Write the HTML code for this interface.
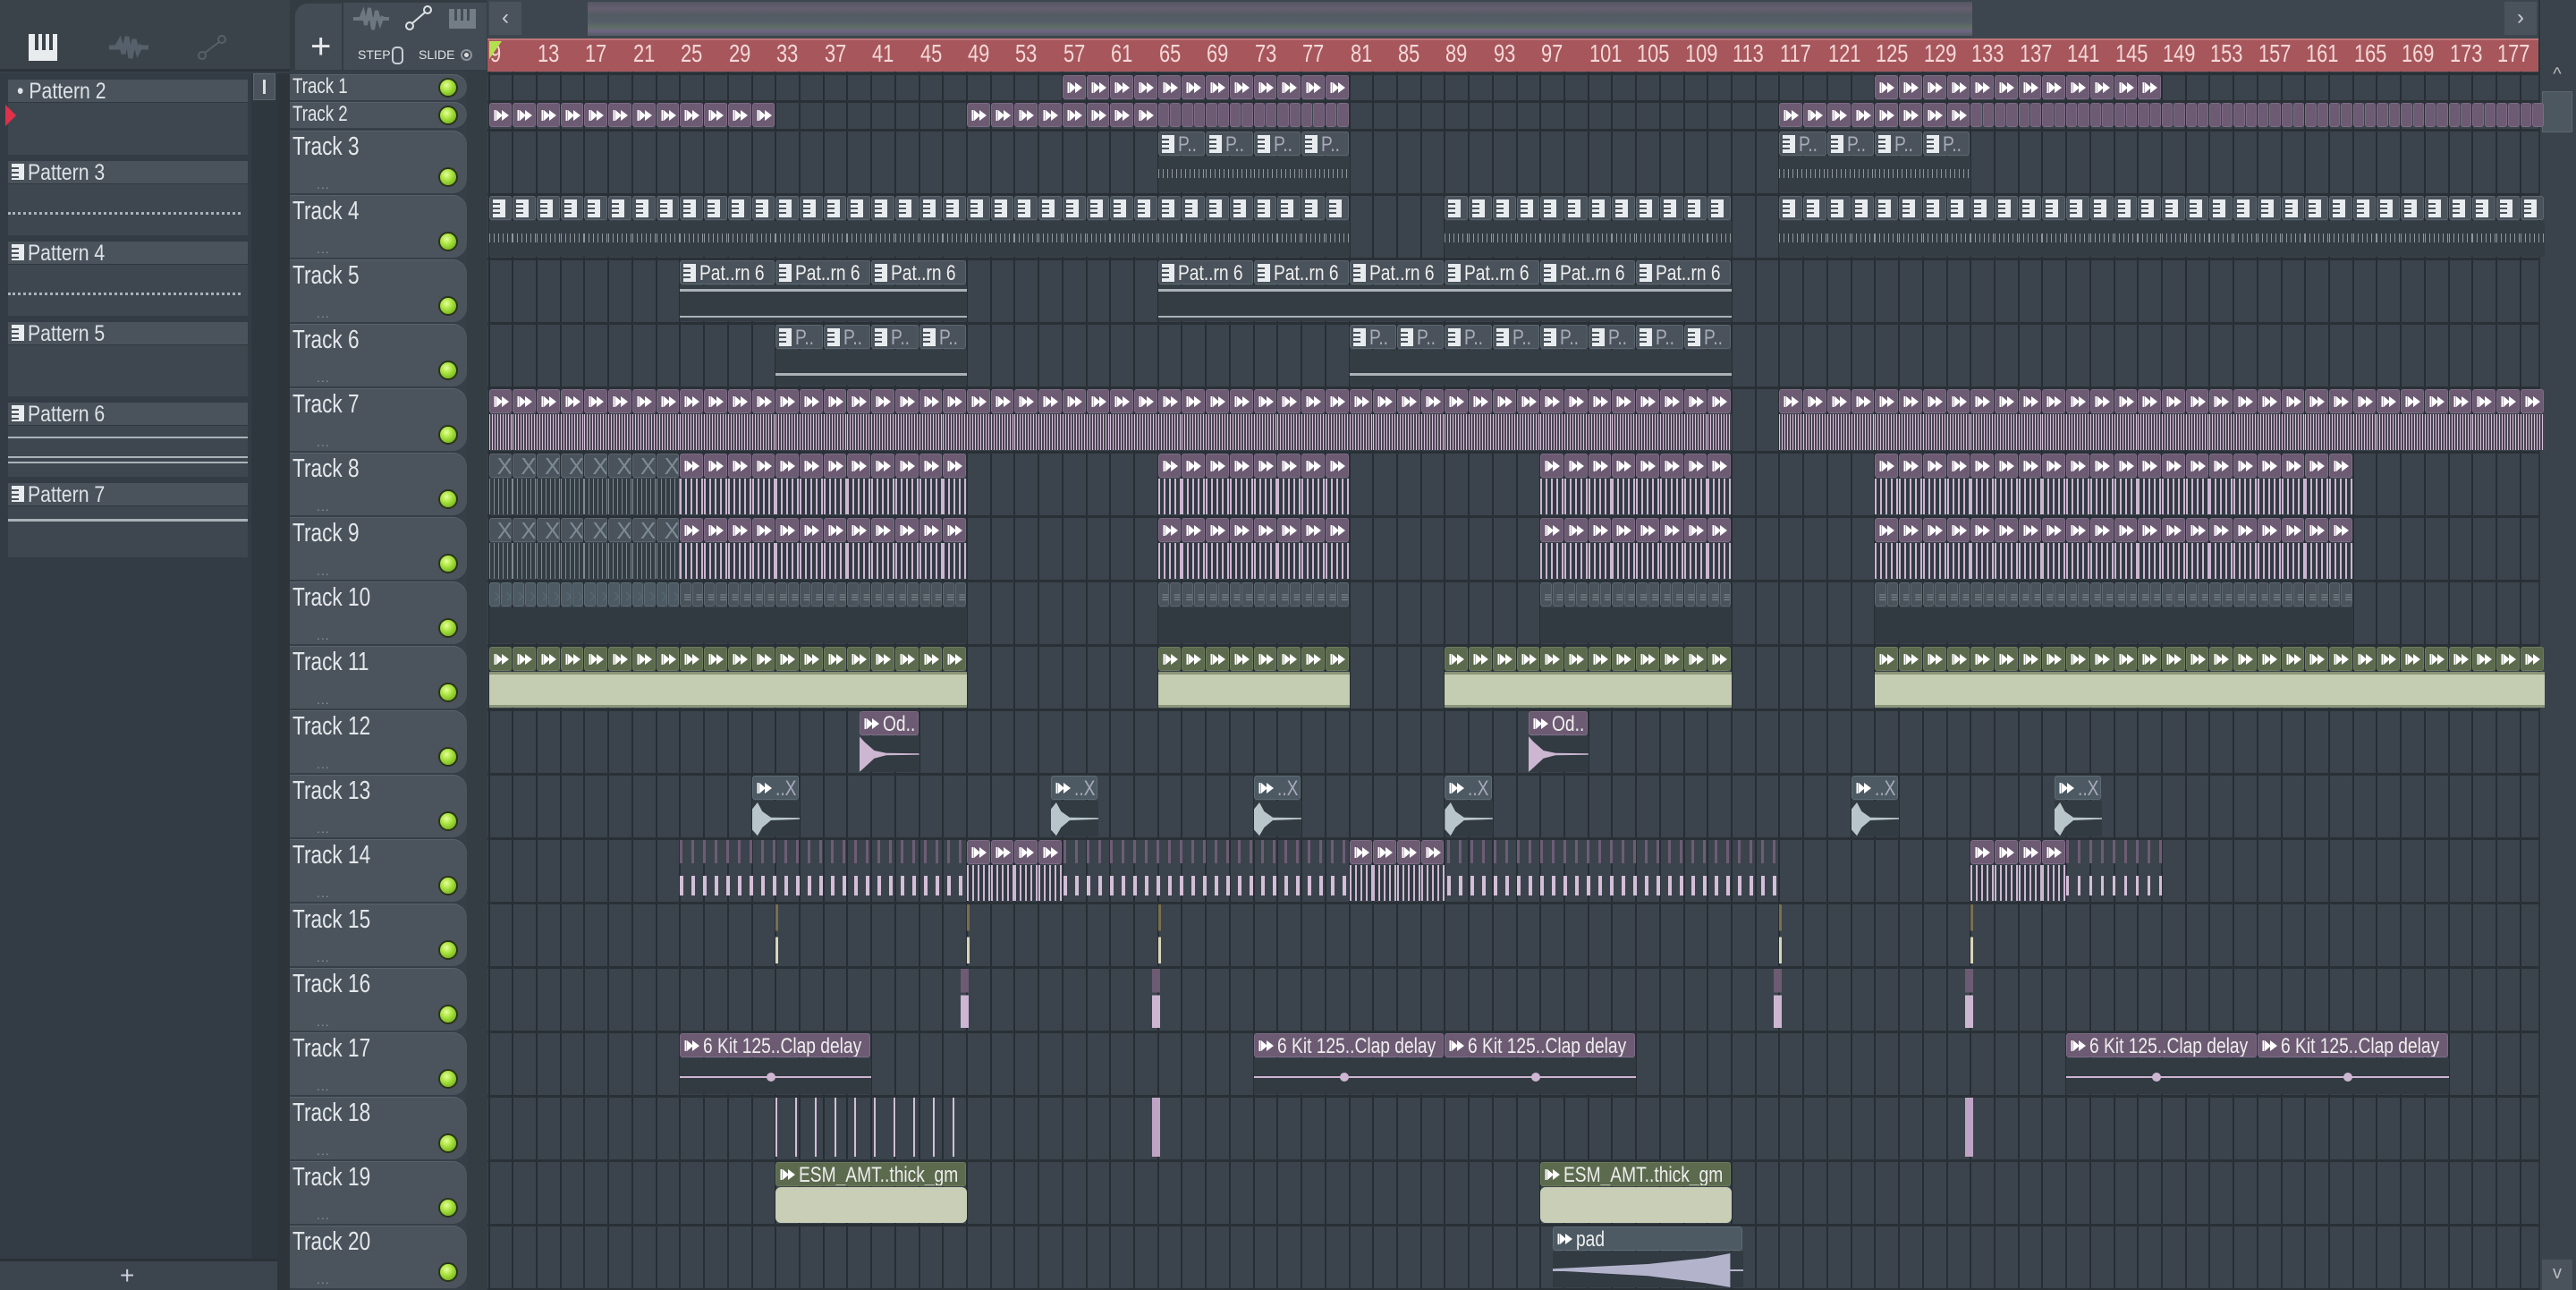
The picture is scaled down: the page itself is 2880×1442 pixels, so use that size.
<!DOCTYPE html>
<html><head><meta charset="utf-8">
<style>
*{box-sizing:border-box;margin:0;padding:0}
body{width:2880px;height:1442px;background:#363f47;overflow:hidden;position:relative;font-family:"Liberation Sans Narrow","Liberation Sans",sans-serif;color:#dde2e6}
.a{position:absolute}
#grid{position:absolute;left:545px;top:80px;width:2293px;height:1362px;background:#3b444c;overflow:hidden}
.th{position:absolute;left:324px;width:198px;background:#4b545c;border-radius:0 16px 16px 0;box-shadow:inset 0 1px 0 #58626a}
.th .l{position:absolute;left:3px;top:2px;font-size:29px;color:#e3e7ea;transform:scaleX(.78);transform-origin:left;white-space:nowrap}
.th .d{position:absolute;left:30px;font-size:14px;color:#8a949a;letter-spacing:1px}
.led{position:absolute;width:22px;height:22px;border-radius:50%;background:radial-gradient(circle at 40% 35%,#e6ff9a 0,#a6e23c 40%,#5f9a14 100%);border:2px solid #2b3319}
.ch{position:absolute;height:27px;border-radius:3px;overflow:hidden;white-space:nowrap;font-size:24px;line-height:27px;color:#eee}
.cb{position:absolute}
.pp{background:#4a535b;border:1px solid #5c666e}
.pu{background:#6c5b73;border:1px solid #7d6b85}
.gr{background:#5c6a4e;border:1px solid #6c7b5c}
.bx{background:#4d5a63;border:1px solid #5d6b74}
.lab{display:inline-block;transform:scaleX(.8);transform-origin:left;vertical-align:top}
.pt{display:inline-block;width:14px;height:20px;margin:3px 4px 0 3px;background:#e8ecef;vertical-align:top;position:relative}
.pt:before{content:"";position:absolute;left:0;top:4px;width:8px;height:2px;background:#4a535b;box-shadow:0 5px 0 #4a535b,0 10px 0 #4a535b}
.ar{display:inline-block;width:18px;height:16px;margin:5px 3px 0 4px;vertical-align:top}
.pi{position:absolute;left:9px;width:268px;background:#3e474f}
.pi .h{height:26px;background:#4a535b;font-size:25px;line-height:26px;padding-left:10px;border-bottom:1px solid #30383f;white-space:nowrap}
.pi .h span.t{display:inline-block;transform:scaleX(.85);transform-origin:left}
.rn{position:absolute;top:44px;font-size:28px;color:#f4d8d8;transform:scaleX(.78);transform-origin:left}
.sh{position:absolute;left:0;top:0;width:100%;height:100%}
</style></head><body>

<div class="a" style="left:0;top:0;width:324px;height:80px;background:#3a434a;border-bottom:3px solid #2c343a"></div>
<svg class="a" style="left:32px;top:38px" width="32" height="30"><rect x="0" y="0" width="32" height="30" fill="#e8ecef"/><rect x="7" y="0" width="4" height="18" fill="#3a434a"/><rect x="15" y="0" width="4" height="18" fill="#3a434a"/><rect x="23" y="0" width="4" height="18" fill="#3a434a"/></svg>
<svg class="a" style="left:122px;top:38px" width="44" height="30"><path d="M0 15 L44 15 M8 15 L12 8 L16 22 L20 3 L24 27 L28 6 L32 20 L36 12" stroke="#56606a" stroke-width="5" fill="none"/></svg>
<svg class="a" style="left:220px;top:38px" width="34" height="30"><circle cx="6" cy="24" r="4" fill="none" stroke="#56606a" stroke-width="2"/><circle cx="28" cy="6" r="4" fill="none" stroke="#56606a" stroke-width="2"/><path d="M9 21 L25 9" stroke="#56606a" stroke-width="2"/></svg>

<div class="a" style="left:0;top:82px;width:281px;height:1325px;background:#333c44"></div>
<div class="a" style="left:281px;top:82px;width:29px;height:1325px;background:#2f373e"></div>
<div class="a" style="left:283px;top:82px;width:25px;height:30px;background:#4a535b;border:1px solid #5b656d"><div style="width:3px;height:16px;background:#ddd;margin:6px auto"></div></div>
<div class="a" style="left:310px;top:82px;width:14px;height:1360px;background:#2d353b"></div>
<div class="a" style="left:0;top:1407px;width:310px;height:35px;background:#3c454d;border-top:3px solid #2a3238"></div>
<div class="a" style="left:134px;top:1410px;font-size:28px;color:#ccd">+</div>

<div class="pi" style="top:89px;height:84px"><div class="h"><span class="t">• Pattern 2</span></div></div>
<svg class="a" style="left:6px;top:117px" width="12" height="24"><path d="M0 0 L12 12 L0 24Z" fill="#e0304a"/></svg>
<div class="pi" style="top:180px;height:83px"><div class="h"><span class="pt" style="margin:3px 4px 0 -6px;height:18px"></span><span class="t">Pattern 3</span></div>
<div style="margin:24px 0 0 0;height:10px;border-bottom:3px dotted #aab2b8;width:260px"></div></div>
<div class="pi" style="top:270px;height:83px"><div class="h"><span class="pt" style="margin:3px 4px 0 -6px;height:18px"></span><span class="t">Pattern 4</span></div>
<div style="margin:24px 0 0 0;height:10px;border-bottom:3px dotted #aab2b8;width:260px"></div></div>
<div class="pi" style="top:360px;height:83px"><div class="h"><span class="pt" style="margin:3px 4px 0 -6px;height:18px"></span><span class="t">Pattern 5</span></div></div>
<div class="pi" style="top:450px;height:83px"><div class="h"><span class="pt" style="margin:3px 4px 0 -6px;height:18px"></span><span class="t">Pattern 6</span></div>
<div style="margin:12px 0 0;height:2px;background:#aab2b8"></div><div style="margin:20px 0 0;height:2px;background:#aab2b8"></div><div style="margin:4px 0 0;height:2px;background:#aab2b8"></div></div>
<div class="pi" style="top:540px;height:83px"><div class="h"><span class="pt" style="margin:3px 4px 0 -6px;height:18px"></span><span class="t">Pattern 7</span></div>
<div style="margin:14px 0 0;height:3px;background:#aab2b8"></div></div>

<div class="a" style="left:324px;top:0;width:221px;height:80px;background:#343c43"></div>
<div class="a" style="left:330px;top:4px;width:52px;height:74px;background:#434c54;border-radius:14px 0 0 0"></div>
<div class="a" style="left:347px;top:30px;font-size:40px;color:#e6e9ec">+</div>
<div class="a" style="left:384px;top:3px;width:160px;height:75px;background:#434c54"></div>
<svg class="a" style="left:395px;top:6px" width="40" height="30"><path d="M0 15 L40 15 M8 15 L11 8 L14 22 L18 3 L22 27 L26 6 L30 20 L33 12" stroke="#6d7780" stroke-width="4" fill="none"/></svg>
<svg class="a" style="left:453px;top:6px" width="30" height="28"><circle cx="5" cy="23" r="4" fill="none" stroke="#dfe3e6" stroke-width="2"/><circle cx="25" cy="5" r="4" fill="none" stroke="#dfe3e6" stroke-width="2"/><path d="M8 20 L22 8" stroke="#dfe3e6" stroke-width="2"/></svg>
<svg class="a" style="left:502px;top:10px" width="30" height="22"><rect width="30" height="22" fill="#737d86"/><rect x="6" y="0" width="3" height="13" fill="#434c54"/><rect x="13" y="0" width="3" height="13" fill="#434c54"/><rect x="20" y="0" width="3" height="13" fill="#434c54"/></svg>
<div class="a" style="left:400px;top:53px;font-size:14px;color:#dfe3e6">STEP</div>
<div class="a" style="left:438px;top:52px;width:13px;height:20px;border:2px solid #c9cfd3;border-radius:5px"></div>
<div class="a" style="left:468px;top:53px;font-size:14px;color:#dfe3e6">SLIDE</div>
<div class="a" style="left:515px;top:55px;width:13px;height:13px;border:2px solid #8a939a;border-radius:50%"><div style="width:5px;height:5px;background:#ddd;border-radius:50%;margin:2px"></div></div>

<div class="a" style="left:545px;top:0;width:2293px;height:43px;background:#3d464e"></div>
<div class="a" style="left:547px;top:2px;width:36px;height:37px;background:#4a535b;color:#ccd;font-size:24px;text-align:center;line-height:36px">‹</div>
<div class="a" style="left:2800px;top:2px;width:36px;height:37px;background:#4a535b;color:#ccd;font-size:24px;text-align:center;line-height:36px">›</div>
<div class="a" style="left:657px;top:2px;width:1548px;height:38px;background:linear-gradient(#5a5a68 0,#6e6478 20%,#586068 40%,#5c6470 60%,#6a7a6a 75%,#7a6e92 85%,#5b6268 100%);opacity:.8"></div>

<div class="a" style="left:545px;top:43px;width:2293px;height:37px;background:#a7575c;border-top:2px solid #c07579"></div>
<div id="ruler"></div>
<svg class="a" style="left:547px;top:46px" width="14" height="20"><path d="M0 0 L14 0 L0 20Z" fill="#b4e050"/></svg>

<div class="a" style="left:2838px;top:0;width:42px;height:1442px;background:#3a434b;border-left:2px solid #2b3339"></div>
<div class="a" style="left:2842px;top:72px;width:34px;height:28px;color:#bbb;font-size:20px;text-align:center">^</div>
<div class="a" style="left:2842px;top:102px;width:34px;height:46px;background:#4d575f;border:1px solid #5d676f"></div>
<div class="a" style="left:2842px;top:1408px;width:34px;height:34px;background:#4a535b;color:#bbb;font-size:20px;text-align:center;line-height:30px">v</div>

<div class="a" style="left:522px;top:80px;width:23px;height:1362px;background:#343d44"></div>
<div id="grid"></div>
<div id="heads"></div>
<div id="clips"></div>

<script>
(function(){
var X=function(b){return 546.6+(b-9)*13.36;};
var G=document.getElementById('grid'),H=document.getElementById('heads'),R=document.getElementById('ruler'),C=document.getElementById('clips');
var h='';
for(var b=13;b<=177;b+=4){h+='<div class="rn" style="left:'+(X(b)+1)+'px">'+b+'</div>';}
h+='<div class="rn" style="left:548px">9</div>';
R.innerHTML=h;
function rowTop(i){return i==1?82:i==2?113:145+(i-3)*72;}
function rowH(i){return i<=2?31:72;}
var g='';
for(var b=9;b<181;b+=2){g+='<div class="a" style="left:'+(X(b)-545-1)+'px;top:0;width:2px;height:1362px;background:#262e34"></div>';}
for(var i=1;i<=21;i++){g+='<div class="a" style="left:0;top:'+(rowTop(i)-80-1)+'px;width:2293px;height:3px;background:#293137"></div>';}
G.innerHTML=g;
var hh='';
for(var i=1;i<=20;i++){
 var t=rowTop(i),hi=rowH(i);
 hh+='<div class="th" style="top:'+(t+1)+'px;height:'+(hi-2)+'px"><div class="l" style="'+(i<=2?'font-size:24px;top:0px':'')+'">Track '+i+'</div>'+(i>2?'<div class="d" style="top:'+(hi-20)+'px">...</div>':'')+'</div>';
 hh+='<div class="led" style="left:490px;top:'+(i<=2?t+5:t+42)+'px"></div>';
}
H.innerHTML=hh;
var AR='<svg class="ar" viewBox="0 0 18 16"><path d="M1.5 2 V14" stroke="#fff" stroke-width="2"/><path d="M3 2 L10 8 L3 14 Z M9 2 L17 8 L9 14 Z" fill="#fff"/></svg>';
var out='';
function clip(tr,b0,b1,cls,lab,body,inner){
 var x=X(b0),w=X(b1)-X(b0)-1,t=rowTop(tr),hi=rowH(tr);
 out+='<div class="ch '+cls+'" style="left:'+x+'px;top:'+(t+2)+'px;width:'+w+'px">'+(lab||'')+'</div>';
 if(body&&hi>40){out+='<div class="cb" style="left:'+x+'px;top:'+(t+30)+'px;width:'+(w+1)+'px;height:'+(hi-32)+'px;'+body+'">'+(inner||'')+'</div>';}
}
function rep(tr,a,z,st,cls,lab,body){for(var b=a;b<z-0.01;b+=st){clip(tr,b,Math.min(b+st,z),cls,lab,body);}}
var P='<span class="pt"></span>';
var WP='background:repeating-linear-gradient(90deg,#d9c3dc 0 1px,#4a4452 1px 3px)';
var WP2='background:repeating-linear-gradient(90deg,#cdb6d2 0 2px,#323a42 2px 6px)';
var NT='background:repeating-linear-gradient(90deg,#8f979d 0 1px,transparent 1px 5px) 0 14px/100% 10px no-repeat,#343c44';
var WG='background:#c4ccb2;border-top:3px solid #8a9478;border-bottom:3px solid #8a9478';
rep(1,57,65,2,'pu',AR);rep(1,65,81,2,'pu',AR);rep(1,125,133,2,'pu',AR);rep(1,133,149,2,'pu',AR);
rep(2,9,33,2,'pu',AR);rep(2,49,65,2,'pu',AR);rep(2,65,81,1,'pu','');rep(2,117,133,2,'pu',AR);rep(2,133,181,1,'pu','');
rep(3,65,81,4,'pp',P+'<span class="lab" style="color:#aab">P..</span>',NT);rep(3,117,133,4,'pp',P+'<span class="lab" style="color:#aab">P..</span>',NT);
rep(4,9,65,2,'pp',P,NT);rep(4,65,81,2,'pp',P,NT);rep(4,89,113,2,'pp',P,NT);rep(4,117,181,2,'pp',P,NT);
var L5=P+'<span class="lab">Pat..rn 6</span>';
var B5='background:linear-gradient(#aab2b8,#aab2b8) 0 4px/100% 3px no-repeat,linear-gradient(#aab2b8,#aab2b8) 0 34px/100% 2px no-repeat,linear-gradient(#aab2b8,#aab2b8) 0 40px/100% 2px no-repeat,#343c44';
rep(5,25,49,8,'pp',L5,B5);rep(5,65,113,8,'pp',L5,B5);
var L6=P+'<span class="lab" style="color:#aab">P..</span>';
var B6='background:linear-gradient(#aab2b8,#aab2b8) 0 26px/100% 3px no-repeat,#343c44';
rep(6,33,49,4,'pp',L6,B6);rep(6,81,113,4,'pp',L6,B6);
rep(7,9,49,2,'pu',AR,WP);rep(7,49,65,2,'pu',AR,WP);rep(7,65,113,2,'pu',AR,WP);rep(7,117,181,2,'pu',AR,WP);
var XX='<span style="color:#7c8a94;font-size:26px;padding-left:8px">X</span>';
[8,9].forEach(function(t){rep(t,9,25,2,'pp',XX,'background:repeating-linear-gradient(90deg,#7f8990 0 1px,#343c44 1px 5px)');
rep(t,25,49,2,'pu',AR,WP2);rep(t,65,81,2,'pu',AR,WP2);rep(t,97,113,2,'pu',AR,WP2);rep(t,125,165,2,'pu',AR,WP2);});
rep(10,9,25,1,'bx','<span style="color:#56656e;padding-left:4px">›</span>','background:#323a41');
[[25,49],[65,81],[97,113],[125,165]].forEach(function(r){rep(10,r[0],r[1],1,'pp','<span style="color:#7a848a;padding-left:3px;font-size:16px">≡</span>','background:#323a41');});
[[9,49],[65,81],[89,113],[125,181]].forEach(function(r){rep(11,r[0],r[1],2,'gr',AR,WG);});
var OD='<div class="sh" style="background:#cdb6d2;clip-path:polygon(0 0,8% 15%,25% 40%,45% 47%,100% 48%,100% 52%,45% 53%,25% 62%,8% 88%,0 100%)"></div>';
clip(12,40,45,'pu',AR+'<span class="lab">Od..</span>','background:#323a42',OD);clip(12,96,101,'pu',AR+'<span class="lab">Od..</span>','background:#323a42',OD);
var KX='<div class="sh" style="background:#b8c6cc;clip-path:polygon(0 25%,12% 5%,22% 30%,40% 47%,100% 48%,100% 52%,40% 55%,22% 75%,12% 98%,0 80%)"></div>';
[31,56,73,89,123,140].forEach(function(b){clip(13,b,b+4,'bx',AR+'<span class="lab" style="color:#aab">..X</span>','background:#323a42',KX);});
out+='<div class="a" style="left:'+X(25)+'px;top:'+(rowTop(14)+2)+'px;width:'+(X(117)-X(25))+'px;height:68px;background:repeating-linear-gradient(90deg,#6e5c75 0 3px,transparent 3px 13px) 0 0/100% 26px no-repeat,repeating-linear-gradient(90deg,#d4bed8 0 4px,transparent 4px 13px) 0 40px/100% 22px no-repeat"></div>';
rep(14,49,57,2,'pu',AR,WP2);rep(14,81,89,2,'pu',AR,WP2);rep(14,133,141,2,'pu',AR,WP2);
out+='<div class="a" style="left:'+X(141)+'px;top:'+(rowTop(14)+2)+'px;width:'+(X(149)-X(141))+'px;height:68px;background:repeating-linear-gradient(90deg,#6e5c75 0 3px,transparent 3px 13px) 0 0/100% 26px no-repeat,repeating-linear-gradient(90deg,#d4bed8 0 3px,transparent 3px 13px) 0 40px/100% 22px no-repeat"></div>';
[33,49,65,117,133].forEach(function(b){out+='<div class="a" style="left:'+X(b)+'px;top:'+(rowTop(15)+2)+'px;width:3px;height:66px;background:linear-gradient(#7a6e4e 0 45%,transparent 45% 55%,#d8d6b8 55%)"></div>';});
[48.5,64.5,116.5,132.5].forEach(function(b){out+='<div class="a" style="left:'+X(b)+'px;top:'+(rowTop(16)+2)+'px;width:9px;height:66px;background:linear-gradient(#6c5b73 0 40%,transparent 40% 45%,#cdb6d2 45%)"></div>';});
var CL=AR+'<span class="lab">6 Kit 125..Clap delay</span>';
var BC='<div class="a" style="left:0;top:20px;width:100%;height:2px;background:#cdb6d2"></div><div class="a" style="left:45%;top:16px;width:10px;height:10px;border-radius:50%;background:#cdb6d2"></div>';
[[25,41],[73,89],[89,105],[141,157],[157,173]].forEach(function(r){clip(17,r[0],r[1],'pu',CL,'background:#323a42',BC);});
out+='<div class="a" style="left:'+X(33)+'px;top:'+(rowTop(18)+2)+'px;width:'+(X(49)-X(33))+'px;height:66px;background:repeating-linear-gradient(90deg,#d4bed8 0 2px,transparent 2px 22px)"></div>';
[64.5,132.5].forEach(function(b){out+='<div class="a" style="left:'+X(b)+'px;top:'+(rowTop(18)+2)+'px;width:9px;height:66px;background:#bfa4c6"></div>';});
var EG=AR+'<span class="lab">ESM_AMT..thick_gm</span>';
clip(19,33,49,'gr',EG,'background:#c8cfb6;border-radius:6px');clip(19,97,113,'gr',EG,'background:#c8cfb6;border-radius:6px');
clip(20,98,114,'bx',AR+'<span class="lab">pad</span>','background:#323a42','<div class="sh" style="background:#b3b4cc;clip-path:polygon(0 48%,50% 35%,80% 18%,93% 5%,93% 100%,80% 88%,50% 68%,0 53%)"></div><div class="a" style="left:0;top:49%;width:100%;height:2px;background:#b3b4cc"></div>');
C.innerHTML=out;
})();
</script>
</body></html>
